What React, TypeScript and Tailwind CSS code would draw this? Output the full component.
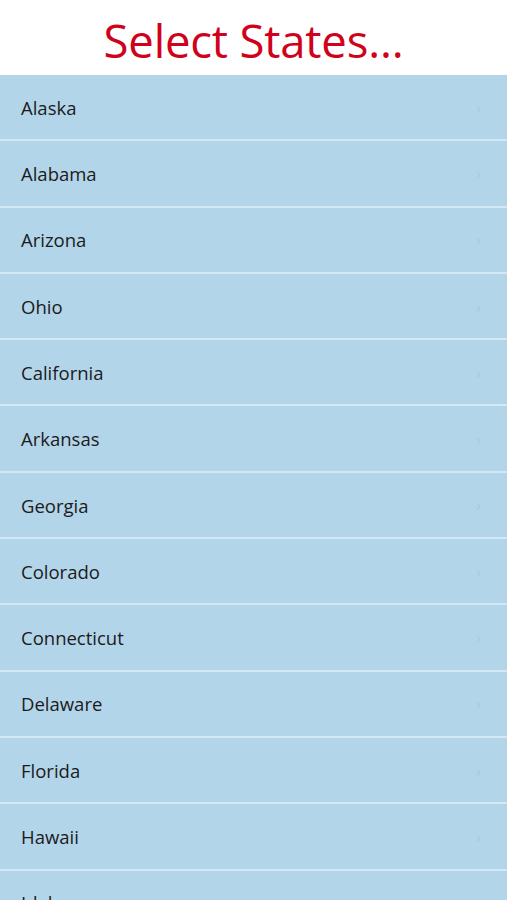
const STATES = [
  'Alaska',
  'Alabama',
  'Arizona',
  'Ohio',
  'California',
  'Arkansas',
  'Georgia',
  'Colorado',
  'Connecticut',
  'Delaware',
  'Florida',
  'Hawaii',
  'Idaho',
  'Illinois',
]

export default function App() {
  return (
    <div className="h-[900px] overflow-hidden bg-white font-['Open_Sans',sans-serif]">
      <header className="flex h-[75px] items-center justify-center pt-[6px]">
        <h1 className="text-[45.5px] leading-none tracking-[-0.2px] text-[#d0021b]">Select States...</h1>
      </header>
      <ul className="bg-[#b3d5ea]">
        {STATES.map((s) => (
          <li
            key={s}
            className="flex h-[66.3px] items-center justify-between border-b-2 border-[#d3e8f5] pl-[21px] pr-[26px] pt-[1px]"
          >
            <span className="text-[18.5px] text-[#1b1b1b]">{s}</span>
            <span className="text-[16px] text-[#a9c9de]">›</span>
          </li>
        ))}
      </ul>
    </div>
  )
}
